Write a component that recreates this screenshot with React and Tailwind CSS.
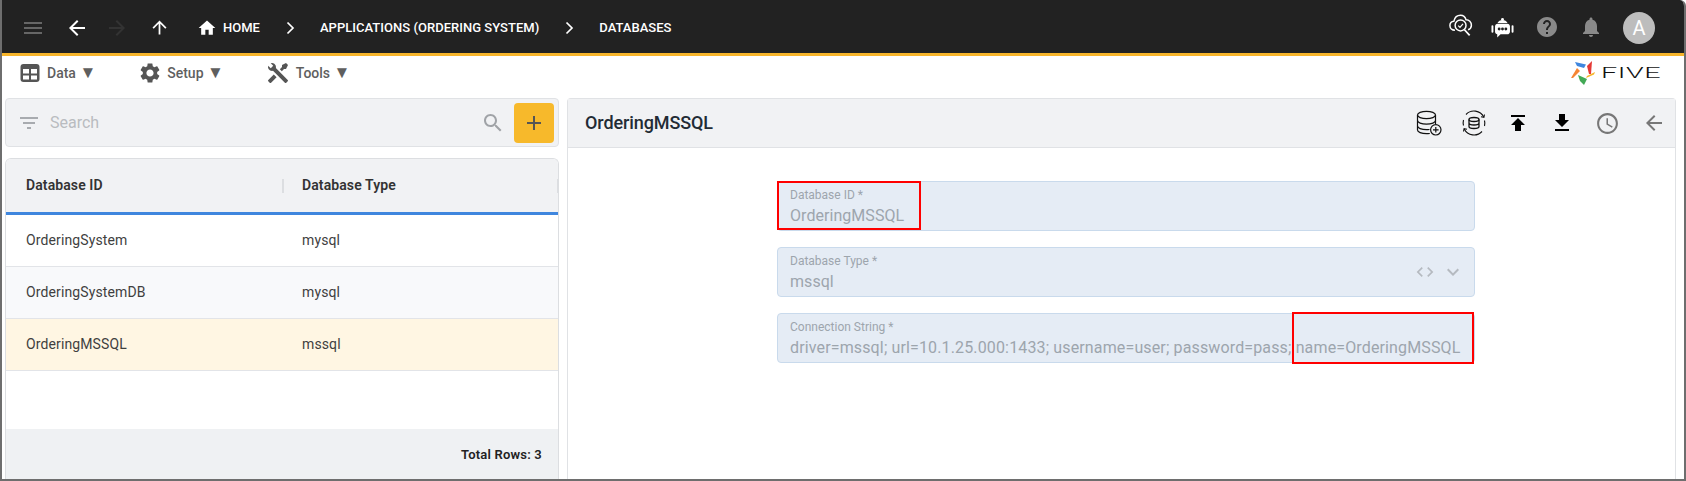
const Icon = ({ d, size = 24, className = "", fill = "currentColor" }) => (
  <svg width={size} height={size} viewBox="0 0 24 24" fill={fill} className={"shrink-0 " + className}>
    <path d={d} />
  </svg>
);

const P = {
  menu: "M3 18h18v-2H3v2zm0-5h18v-2H3v2zm0-7v2h18V6H3z",
  back: "M20 11H7.83l5.59-5.59L12 4l-8 8 8 8 1.41-1.41L7.83 13H20v-2z",
  forward: "M12 4l-1.41 1.41L16.17 11H4v2h12.17l-5.58 5.59L12 20l8-8z",
  up: "M4 12l1.41 1.41L11 7.83V20h2V7.83l5.58 5.59L20 12l-8-8-8 8z",
  home: "M10 20v-6h4v6h5v-8h3L12 3 2 12h3v8z",
  help: "M12 2C6.48 2 2 6.48 2 12s4.48 10 10 10 10-4.48 10-10S17.52 2 12 2zm1 17h-2v-2h2v2zm2.07-7.75l-.9.92C13.45 12.9 13 13.5 13 15h-2v-.5c0-1.1.45-2.1 1.17-2.83l1.24-1.26c.37-.36.59-.86.59-1.41 0-1.1-.9-2-2-2s-2 .9-2 2H8c0-2.21 1.79-4 4-4s4 1.79 4 4c0 .88-.36 1.68-.93 2.25z",
  bell: "M12 22c1.1 0 2-.9 2-2h-4c0 1.1.89 2 2 2zm6-6v-5c0-3.07-1.64-5.64-4.5-6.32V4c0-.83-.67-1.5-1.5-1.5s-1.5.67-1.5 1.5v.68C7.63 5.36 6 7.92 6 11v5l-2 2v1h16v-1l-2-2z",
  gear: "M19.14 12.94c.04-.3.06-.61.06-.94 0-.32-.02-.64-.07-.94l2.03-1.58c.18-.14.23-.41.12-.61l-1.92-3.32c-.12-.22-.37-.29-.59-.22l-2.39.96c-.5-.38-1.03-.7-1.62-.94l-.36-2.54c-.04-.24-.24-.41-.48-.41h-3.84c-.24 0-.43.17-.47.41l-.36 2.54c-.59.24-1.13.57-1.62.94l-2.39-.96c-.22-.08-.47 0-.59.22L2.74 8.87c-.12.21-.08.47.12.61l2.03 1.58c-.05.3-.09.63-.09.94s.02.64.07.94l-2.03 1.58c-.18.14-.23.41-.12.61l1.92 3.32c.12.22.37.29.59.22l2.39-.96c.5.38 1.03.7 1.62.94l.36 2.54c.05.24.24.41.48.41h3.84c.24 0 .44-.17.47-.41l.36-2.54c.59-.24 1.13-.56 1.62-.94l2.39.96c.22.08.47 0 .59-.22l1.92-3.32c.12-.22.07-.47-.12-.61l-2.01-1.58zM12 15.6c-1.98 0-3.6-1.62-3.6-3.6s1.62-3.6 3.6-3.6 3.6 1.62 3.6 3.6-1.62 3.6-3.6 3.6z",
  tools: "M21.71 20.29L20.29 21.71A1 1 0 0 1 18.88 21.71L7 9.85A3.81 3.81 0 0 1 6 10A4 4 0 0 1 2.22 4.7L4.76 7.24L5.29 6.71L6.71 5.29L7.24 4.76L4.7 2.22A4 4 0 0 1 10 6A3.81 3.81 0 0 1 9.85 7L21.71 18.88A1 1 0 0 1 21.71 20.29M2.29 18.88A1 1 0 0 0 2.29 20.29L3.71 21.71A1 1 0 0 0 5.12 21.71L10.59 16.25L7.76 13.42M20 2L16 4V6L13.83 8.17L15.83 10.17L18 8H20L22 4Z",
  filter: "M10 18h4v-2h-4v2zM3 6v2h18V6H3zm3 7h12v-2H6v2z",
  search: "M15.5 14h-.79l-.28-.27C15.41 12.59 16 11.11 16 9.5 16 5.91 13.09 3 9.5 3S3 5.91 3 9.5 5.91 16 9.5 16c1.61 0 3.09-.59 4.23-1.57l.27.28v.79l5 4.99L20.49 19l-4.99-5zm-6 0C7.01 14 5 11.99 5 9.5S7.01 5 9.5 5 14 7.01 14 9.5 11.99 14 9.5 14z",
  add: "M19 13h-6v6h-2v-6H5v-2h6V5h2v6h6v2z",
  publish: "M5 4v2h14V4H5zm0 10h4v6h6v-6h4l-7-7-7 7z",
  download: "M19 9h-4V3H9v6H5l7 7 7-7zM5 18v2h14v-2H5z",
  clock: "M11.99 2C6.47 2 2 6.48 2 12s4.47 10 9.99 10C17.52 22 22 17.52 22 12S17.52 2 11.99 2zM12 20c-4.42 0-8-3.58-8-8s3.58-8 8-8 8 3.58 8 8-3.58 8-8 8zm.5-13H11v6l5.25 3.15.75-1.23-4.5-2.67z",
  more: "M16.59 8.59L12 13.17 7.41 8.59 6 10l6 6 6-6z",
  code: "M9.4 16.6L4.8 12l4.6-4.6L8 6l-6 6 6 6 1.4-1.4zm5.2 0l4.6-4.6-4.6-4.6L16 6l6 6-6 6-1.4-1.4z",
};

const Chevron = () => (
  <svg width="12" height="14" viewBox="0 0 12 14" fill="none" stroke="white" strokeWidth="1.7" className="shrink-0">
    <path d="M3.5 1.5 9 7l-5.5 5.5" />
  </svg>
);

const CloudSearch = () => (
  <svg width="26" height="26" viewBox="0 0 30 30" fill="none" stroke="white" strokeWidth="1.700" className="shrink-0 -mt-[5px]">
    <path d="M8 21C4.500 21 2.200 18.600 2.200 15.700c0-2.700 2-4.800 4.600-5.100C7.600 6.900 10.600 3.800 14.500 3.800c3.300 0 5.400 2.100 6.300 5.100 3.400-.1 6.200 2.800 6.200 6.300 0 2.500-1.500 4.400-3.800 5.200" />
    <circle cx="14.500" cy="15.500" r="6.300" />
    <path d="M19 20.500 25 27" strokeWidth="2" />
    <path d="M11.800 15.700l2 2 3.500-4" strokeWidth="1.400" />
  </svg>
);

const Bot = () => (
  <svg width="23" height="23" viewBox="0 0 24 24" fill="white" className="shrink-0 mt-[1px]">
    <circle cx="12" cy="2.500" r="1.500" />
    <path d="M12 3c-2.500 0-4.200 1.300-5.200 3.300h10.400C16.200 4.300 14.500 3 12 3z" />
    <path fillRule="evenodd" d="M7 7h10c1.600 0 2.800 1.200 2.800 3v5c0 1.800-1.200 3-2.800 3h-7l-3.500 3.500V18C5.400 17.800 4.200 16.800 4.200 15v-5C4.200 8.200 5.400 7 7 7zm1.500 4a1.500 1.500 0 1 0 0 3 1.500 1.500 0 0 0 0-3zm3.500 0a1.500 1.500 0 1 0 0 3 1.500 1.500 0 0 0 0-3zm3.500 0a1.500 1.500 0 1 0 0 3 1.500 1.500 0 0 0 0-3z" />
    <rect x="0.500" y="8.500" width="2" height="8" rx="1" />
    <rect x="21.500" y="8.500" width="2" height="8" rx="1" />
  </svg>
);

const DbPlus = () => (
  <svg width="26" height="26" viewBox="0 0 26 26" fill="none" stroke="#111" strokeWidth="1.200" className="shrink-0">
    <ellipse cx="10.500" cy="5" rx="9" ry="3.700" />
    <path d="M1.500 5v15c0 2 4 3.700 9 3.700 1.200 0 2.300-.1 3.300-.2" />
    <path d="M19.500 5v9" />
    <path d="M1.500 10.500c0 2 4 3.700 9 3.700s9-1.700 9-3.700" />
    <path d="M1.500 16c0 2 4 3.700 9 3.700 1.100 0 2.100-.1 3-.2" />
    <circle cx="19.800" cy="19.800" r="5.200" fill="#f1f2f4" />
    <path d="M19.800 17v5.600M17 19.800h5.600" />
  </svg>
);

const DbSync = () => (
  <svg width="26" height="26" viewBox="0 0 26 26" fill="none" stroke="#111" strokeWidth="1.100" className="shrink-0">
    <path d="M5 4.500A11 11 0 0 1 22.800 7" />
    <path d="M23.500 4.500 22.900 7.400 20 6.800" />
    <path d="M21 21.500A11 11 0 0 1 3.200 19" />
    <path d="M2.500 21.500 3.100 18.600 6 19.200" />
    <path d="M2.500 15.500A11 11 0 0 1 2.500 10" />
    <path d="M23.500 10.500A11 11 0 0 1 23.500 16" />
    <ellipse cx="13" cy="9.500" rx="5" ry="2" strokeWidth="1.300" />
    <path d="M8 9.500v7c0 1.100 2.200 2 5 2s5-.9 5-2v-7M8 13c0 1.100 2.200 2 5 2s5-.9 5-2" strokeWidth="1.300" />
  </svg>
);

const Star = () => (
  <svg width="24" height="24" viewBox="0 0 24 24" className="shrink-0">
    <polygon points="4,1 15,3.500 13,7 6,5" fill="#3f86de" />
    <polygon points="16,5 21,0 20,13 18,13" fill="#e53935" />
    <polygon points="16,15 24,11 23,13.500 15,17" fill="#f7b52b" />
    <polygon points="7,14 16,18 13,24 9,20" fill="#43a956" />
    <polygon points="6,7 9,10 2,17 0,17" fill="#f58634" />
  </svg>
);

const TableIcon = () => (
  <svg width="20" height="20" viewBox="0 0 20 20" className="shrink-0">
    <rect x="0.500" y="1" width="19" height="18" rx="3" fill="#555" />
    <rect x="3" y="6" width="6" height="4.500" fill="white" />
    <rect x="11" y="6" width="6" height="4.500" fill="white" />
    <rect x="3" y="12.500" width="6" height="4" fill="white" />
    <rect x="11" y="12.500" width="6" height="4" fill="white" />
  </svg>
);

const Menu = ({ icon, label, className }) => (
  <div className={"flex items-center text-[14px] font-medium text-[#5f5f5f] " + className}>
    {icon}
    <span>{label} <span className="text-[17px] leading-[14px]">▼</span></span>
  </div>
);

const Field = ({ label, value, icons, track = "tracking-[0.05px]" }) => (
  <div className="h-[50px] rounded-[4px] border border-[#c9daec] bg-[#e5ecf5] pl-[12px] pr-[12px] flex items-center justify-between">
    <div className="flex flex-col min-w-0">
      <span className="text-[12px] leading-[14px] text-[#9da5ad] mt-[1px]">{label}</span>
      <span className={"mt-[4px] text-[16px] leading-[20px] text-[#9da5ad] whitespace-nowrap " + track}>{value}</span>
    </div>
    {icons}
  </div>
);

const Row = ({ a, b, className }) => (
  <div className={"h-[52px] flex items-center border-b border-[#e2e4e8] text-[14px] tracking-[0.12px] text-[#3f3f3f] " + className}>
    <span className="w-[296px] pl-[20px]">{a}</span>
    <span>{b}</span>
  </div>
);

export default function App() {
  return (
    <div className="relative w-[1686px] h-[481px] overflow-hidden bg-white border-l-2 border-r-2 border-b-2 border-[#6e6e6e] rounded-tr-[6px] font-['Roboto',sans-serif]">
      <header className="h-[56px] pt-[2px] bg-[#222222] border-b-[3px] border-[#f7b52b] flex items-center text-white">
        <Icon d={P.menu} className="ml-[19px] text-[#666666]" />
        <Icon d={P.back} className="ml-[20px]" />
        <Icon d={P.forward} className="ml-[16px] text-[#333333]" />
        <Icon d={P.up} size={21} className="ml-[20px]" />
        <Icon d={P.home} size={20} className="ml-[27px]" />
        <span className="ml-[6px] text-[13px] font-medium">HOME</span>
        <span className="ml-[24px]"><Chevron /></span>
        <span className="ml-[24px] text-[13px] font-medium tracking-[0.03px]">APPLICATIONS (ORDERING SYSTEM)</span>
        <span className="ml-[24px]"><Chevron /></span>
        <span className="ml-[24px] text-[13px] font-medium">DATABASES</span>
        <div className="ml-auto flex items-center pr-[29px]">
          <CloudSearch />
          <span className="ml-[17px]"><Bot /></span>
          <Icon d={P.help} size={24} className="ml-[21px] -mt-[2px] text-[#8a8a8a]" />
          <Icon d={P.bell} size={24} className="ml-[20px] -mt-[2px] text-[#8a8a8a]" />
          <div className="ml-[20px] w-[32px] h-[32px] rounded-full bg-[#bdbdbd] flex items-center justify-center text-[20px] text-white">A</div>
        </div>
      </header>

      <div className="h-[42px] flex items-center">
        <div className="flex items-center self-start h-[24px] mt-[5px]">
          <Menu icon={<TableIcon />} label="Data" className="ml-[18px] gap-[7px]" />
          <Menu icon={<Icon d={P.gear} size={24} className="text-[#555]" />} label="Setup" className="ml-[42px] gap-[5px]" />
          <Menu icon={<Icon d={P.tools} size={24} className="text-[#555]" />} label="Tools" className="ml-[42px] gap-[6px]" />
        </div>
        <div className="ml-auto mr-[26px] -mt-[8px] flex items-center gap-[6px]">
          <Star />
          <span className="w-[57px] text-[14px] leading-[14px] font-light text-[#111111] origin-left scale-x-[2.05] tracking-[0.3px]">FIVE</span>
        </div>
      </div>

      <div className="flex pl-[3px] pr-[8px] gap-[8px]">
        <div className="w-[554px] shrink-0 flex flex-col gap-[11px]">
          <div className="h-[49px] flex items-center rounded-[4px] border border-[#e0e2e5] bg-[#f1f2f4] pr-[4px]">
            <Icon d={P.filter} className="ml-[11px] text-[#a8abaf]" />
            <span className="ml-[9px] flex-1 text-[16px] text-[#b9bcc0]">Search</span>
            <Icon d={P.search} className="mr-[9px] text-[#a0a3a7]" />
            <div className="w-[40px] h-[40px] rounded-[4px] bg-[#f7b92b] flex items-center justify-center">
              <Icon d={P.add} size={24} className="text-[#555]" />
            </div>
          </div>
          <div className="h-[322px] flex flex-col rounded-t-[6px] border border-b-0 border-[#dcdee1] overflow-hidden">
            <div className="h-[56px] shrink-0 flex items-center bg-[#f1f2f4] border-b-[3px] border-[#3f86de] text-[14px] font-semibold tracking-[0.1px] text-[#333]">
              <span className="w-[276px] pl-[20px]">Database ID</span>
              <span className="w-[2px] h-[14px] bg-[#dcdee1]" />
              <span className="pl-[18px] flex-1">Database Type</span>
              <span className="w-[1px] h-[14px] bg-[#dcdee1]" />
            </div>
            <Row a="OrderingSystem" b="mysql" className="bg-white" />
            <Row a="OrderingSystemDB" b="mysql" className="bg-[#f8f9fb]" />
            <Row a="OrderingMSSQL" b="mssql" className="bg-[#fff6e3]" />
            <div className="h-[58px] shrink-0 bg-white" />
            <div className="flex-1 bg-[#eff1f3] flex items-center justify-end pr-[16px] text-[13px] font-semibold tracking-[0.2px] text-[#222]">Total Rows: 3</div>
          </div>
        </div>

        <div className="w-[1109px] h-[381px] flex flex-col rounded-t-[4px] border border-b-0 border-[#e0e2e5]">
          <div className="h-[49px] shrink-0 flex items-center bg-[#f1f2f4] border-b border-[#e0e2e5] pl-[17px] pr-[9px]">
            <span className="flex-1 text-[18px] font-medium tracking-[-0.1px] text-[#222b35] -mt-[2px]">OrderingMSSQL</span>
            <DbPlus />
            <span className="ml-[19px]"><DbSync /></span>
            <Icon d={P.publish} className="ml-[19px] text-black" />
            <Icon d={P.download} className="ml-[20px] text-black" />
            <Icon d={P.clock} size={25} className="ml-[21px] text-[#777]" />
            <Icon d={P.back} className="ml-[22px] text-[#777]" />
          </div>
          <div className="pt-[33px] flex flex-col gap-[16px] pl-[209px] pr-[200px]">
            <Field label="Database ID *" value="OrderingMSSQL" />
            <Field
              label="Database Type *"
              value="mssql"
              icons={
                <div className="flex items-center gap-[6px] text-[#b5bac0] -mt-[1px] -mr-[3px]">
                  <Icon d={P.code} size={20} />
                  <Icon d={P.more} size={24} />
                </div>
              }
            />
            <Field track="tracking-[0.14px]" label="Connection String *" value="driver=mssql; url=10.1.25.000:1433; username=user; password=pass; name=OrderingMSSQL" />
          </div>
        </div>
      </div>

      <div className="absolute left-[775px] top-[181px] w-[144px] h-[49px] border-2 border-[#ff0000]" />
      <div className="absolute left-[1290px] top-[312px] w-[182px] h-[52px] border-2 border-[#ff0000]" />
    </div>
  );
}
